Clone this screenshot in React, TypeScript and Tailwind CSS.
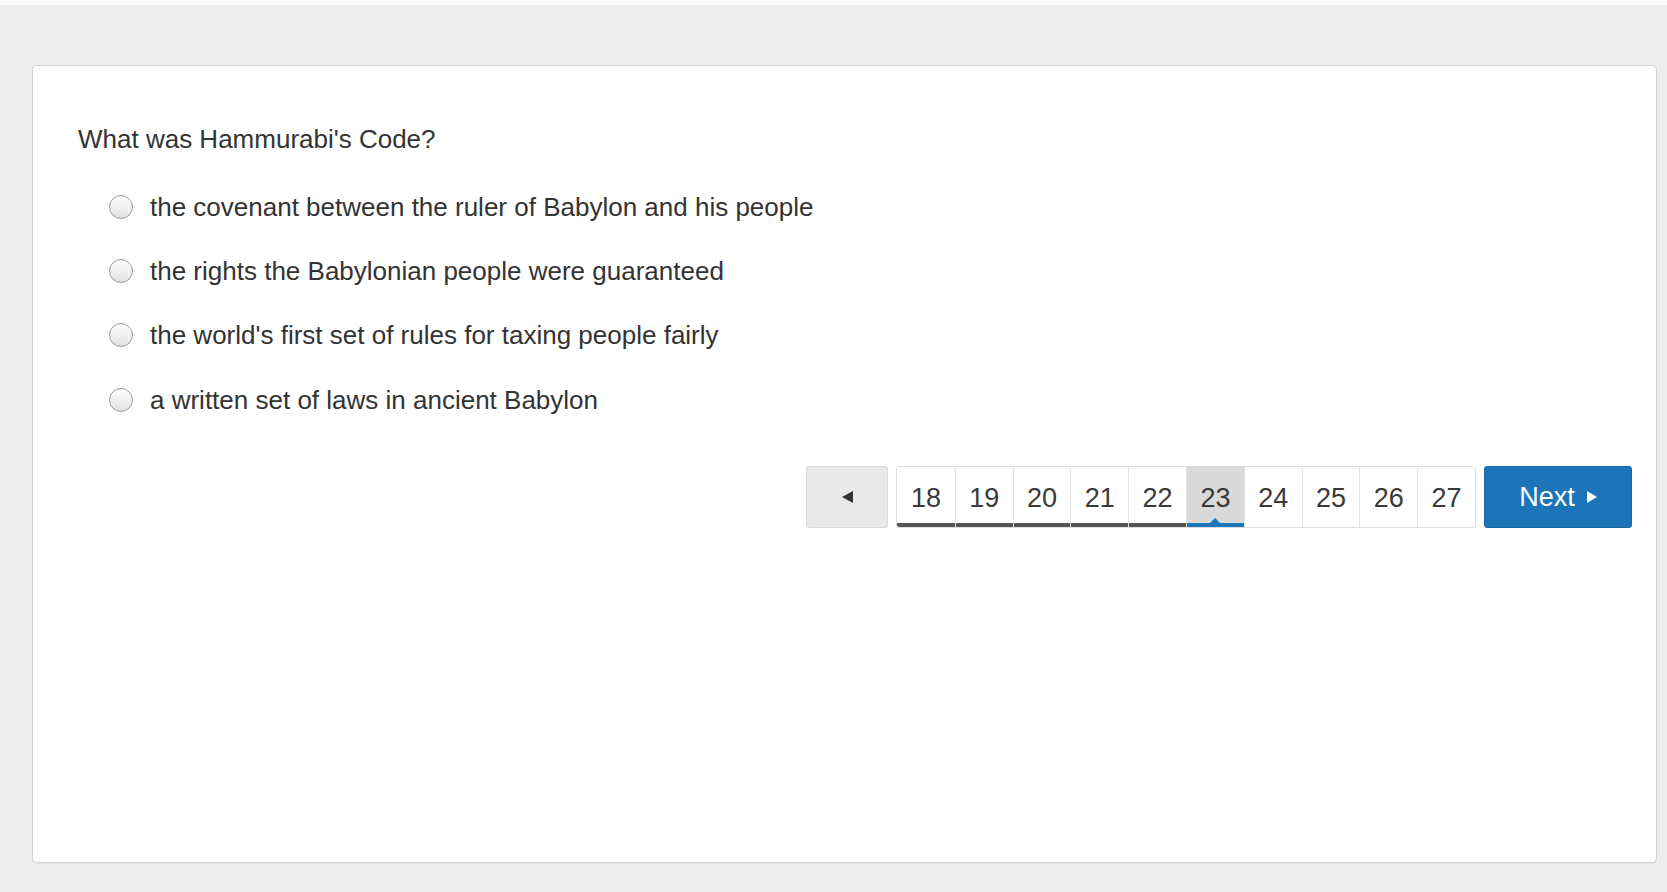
import React from "react";

const options = [
  "the covenant between the ruler of Babylon and his people",
  "the rights the Babylonian people were guaranteed",
  "the world's first set of rules for taxing people fairly",
  "a written set of laws in ancient Babylon",
];

const pages = [18, 19, 20, 21, 22, 23, 24, 25, 26, 27];

export default function App() {
  return (
    <div
      className="w-full h-[892px] bg-[#ededed] border-t-[5px] border-[#f9f9f9] overflow-hidden text-[#333]"
      style={{ fontFamily: '"Liberation Sans", Arial, Helvetica, sans-serif' }}
    >
      <div className="ml-[32px] mt-[60px] w-[1625px] h-[798px] bg-white border border-[#d2d2d2] rounded-[5px] shadow-[0_1px_1px_rgba(0,0,0,0.05)]">
        <div className="pl-[45px] pt-[58px] text-[26px] leading-[30px]">What was Hammurabi's Code?</div>
        <div className="mt-[21px] flex flex-col">
          {options.map((o) => (
            <label key={o} className="h-[64.2px] flex items-center pl-[76px]">
              <span className="w-[24px] h-[24px] rounded-full border border-[#9a9a9a] bg-[linear-gradient(to_bottom,#ffffff,#e2e2e2)] shadow-[inset_0_1px_1px_rgba(255,255,255,0.9)]" />
              <span className="ml-[17px] text-[26px] leading-[30px]">{o}</span>
            </label>
          ))}
        </div>
        <div className="mt-[34px] flex justify-end pr-[24px] gap-[8px] h-[62px]">
          <button className="w-[82px] h-[62px] bg-[#e9e9e9] border border-[#dadada] rounded-[3px] flex items-center justify-center">
            <svg width="11" height="12" viewBox="0 0 11 12">
              <polygon points="0,6 11,0 11,12" fill="#333" />
            </svg>
          </button>
          <div className="flex h-[62px] border border-[#dedede] rounded-[3px] overflow-hidden">
            {pages.map((p, i) => {
              const active = p === 23;
              const done = p < 23;
              return (
                <div
                  key={p}
                  className={`relative w-[57.8px] h-full flex items-center justify-center text-[27px] text-[#3a3a3a] ${
                    i > 0 ? "border-l border-[#e3e3e3]" : ""
                  } ${active ? "bg-[#d9d9d9]" : "bg-white"}`}
                >
                  <span className="mt-[2px]">{p}</span>
                  {done && <div className="absolute left-0 right-0 bottom-0 h-[4px] bg-[#555555]" />}
                  {active && (
                    <>
                      <div className="absolute left-0 right-0 bottom-0 h-[4px] bg-[#1b75b9]" />
                      <svg className="absolute bottom-[3px] left-1/2 -translate-x-1/2" width="12" height="6" viewBox="0 0 12 6">
                        <polygon points="0,6 6,0 12,6" fill="#1b75b9" />
                      </svg>
                    </>
                  )}
                </div>
              );
            })}
          </div>
          <button className="w-[148px] h-[62px] bg-[#1c75b8] border border-[#1a6aa6] rounded-[3px] flex items-center justify-center text-white text-[27px]">
            <span>Next</span>
            <svg className="ml-[12px]" width="10" height="12" viewBox="0 0 10 12">
              <polygon points="0,0 10,6 0,12" fill="#ffffff" />
            </svg>
          </button>
        </div>
      </div>
    </div>
  );
}
